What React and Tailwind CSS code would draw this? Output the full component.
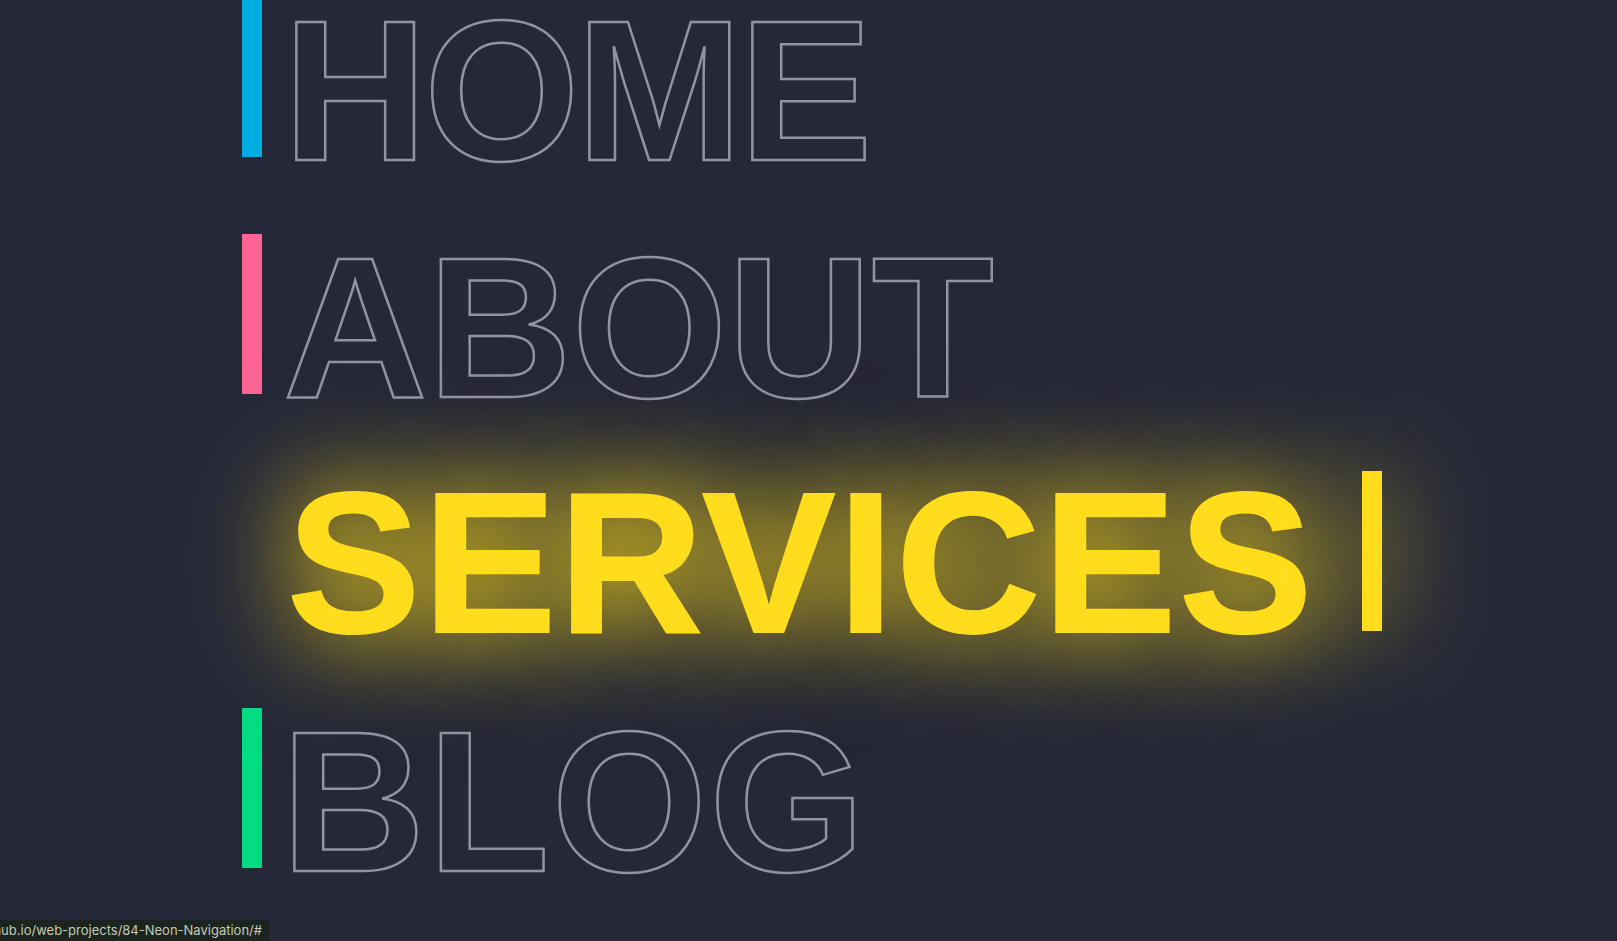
const items = [
  { label: 'HOME', bar: 'bg-[#00ade1]', text: 'ml-[21px] tracking-[-3.5px]' },
  { label: 'ABOUT', bar: 'bg-[#ff6493]', text: 'ml-[21px] tracking-[0px]' },
  { label: 'SERVICES', bar: 'bg-[#ffdd1c]', active: true },
  { label: 'BLOG', bar: 'bg-[#00dc82]', text: 'ml-[19px] tracking-[2px]' },
];

function NavItem({ label, bar, text, active }) {
  if (active) {
    return (
      <li className="flex h-[160px] items-start">
        <a
          href="#"
          className="ml-[45px] text-[200px] leading-[184px] font-bold tracking-[2.5px] text-[#ffdd1c] [-webkit-text-stroke:2px_#ffdd1c] [text-shadow:0_0_90px_#ffdd1c,0_0_130px_#ffdd1c80]"
        >
          {label}
        </a>
        <span className={`ml-[47px] h-[160px] w-[20px] shrink-0 shadow-[0_0_100px_#ffdd1c] ${bar}`} />
      </li>
    );
  }
  return (
    <li className="flex h-[160px] items-start">
      <span className={`h-[160px] w-[20px] shrink-0 ${bar}`} />
      <a
        href="#"
        className={`text-[200px] leading-[188px] font-bold text-transparent [-webkit-text-stroke:2.5px_#8f93a3] ${text}`}
      >
        {label}
      </a>
    </li>
  );
}

export default function App() {
  return (
    <div className="relative h-[941px] overflow-hidden bg-[#252839] font-['Liberation_Sans',Arial,sans-serif]">
      <ul className="-mt-[3px] ml-[242px] flex flex-col gap-[77px]">
        {items.map((item) => (
          <NavItem key={item.label} {...item} />
        ))}
      </ul>
      <div className="absolute bottom-0 left-0 flex h-[21px] w-[269px] items-center justify-end overflow-hidden rounded-tr-[3px] bg-[#1c2420] pt-[1px] pr-[7px] font-['Inter',sans-serif] text-[13px] whitespace-nowrap text-[#c3cbb4]">
        github.io/web-projects/84-Neon-Navigation/#
      </div>
    </div>
  );
}
